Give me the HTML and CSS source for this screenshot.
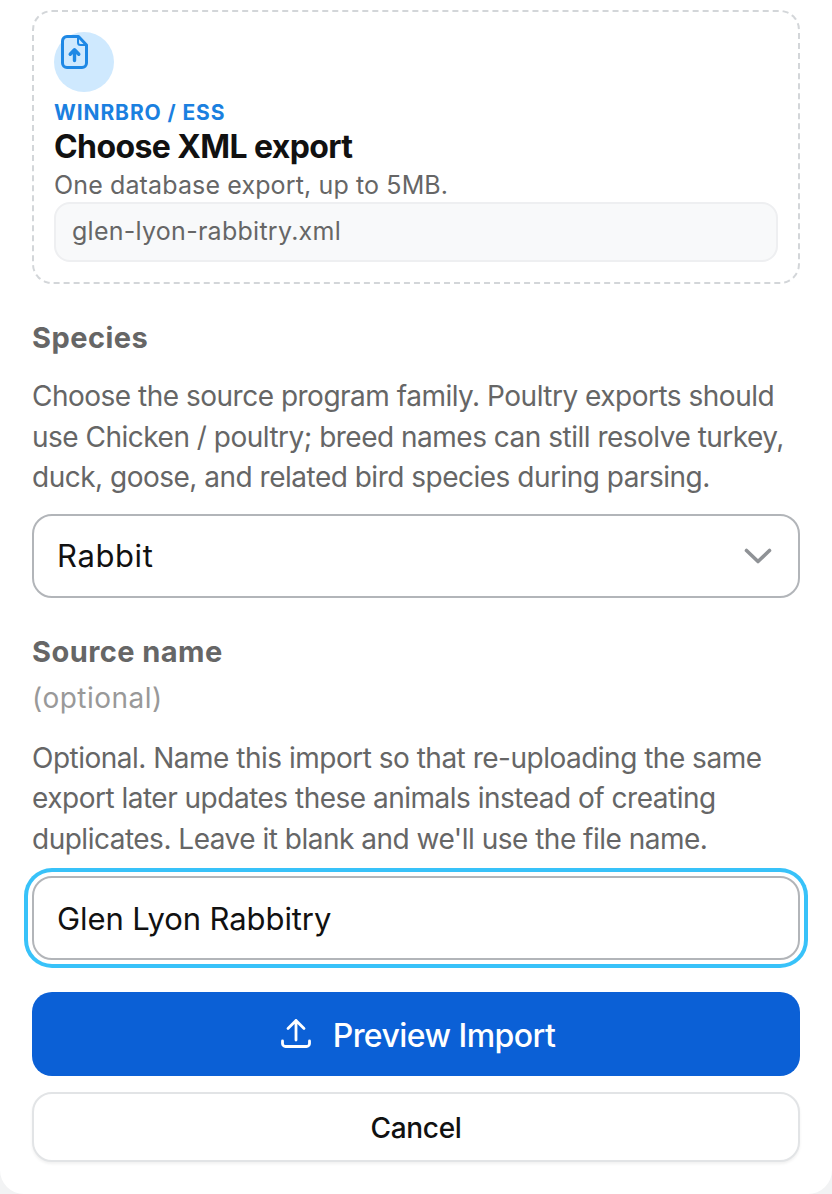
FILE: index.html
```html
<!DOCTYPE html>
<html lang="en">
<head>
<meta charset="utf-8">
<title>Import</title>
<link rel="stylesheet" href="styles.css">
</head>
<body>
<main class="sheet">
  <section class="drop">
    <div class="drop-icon">
      <svg class="file-svg" viewBox="0 0 27 34" width="27" height="34" fill="none">
        <path d="M6 1.500h11.500L25.500 10V28a4.500 4.500 0 0 1-4.500 4.500H6A4.500 4.500 0 0 1 1.500 28V6A4.500 4.500 0 0 1 6 1.500Z" stroke="#1e88e5" stroke-width="3" stroke-linejoin="round"/>
        <path d="M17 2v5.500a2.500 2.500 0 0 0 2.500 2.500H25" stroke="#1e88e5" stroke-width="2"/>
        <path d="M13.500 25.500V15M9.200 19.200 13.500 14.800 17.800 19.200" stroke="#1e88e5" stroke-width="3.400" stroke-linecap="round" stroke-linejoin="round"/>
      </svg>
    </div>
    <div class="eyebrow">WINRBRO / ESS</div>
    <h2 class="drop-title">Choose XML export</h2>
    <p class="drop-sub">One database export, up to 5MB.</p>
    <div class="file-name">glen-lyon-rabbitry.xml</div>
  </section>

  <section class="field species">
    <label class="label">Species</label>
    <p class="help">Choose the source program family. Poultry exports should use Chicken / poultry; breed names can still resolve turkey, duck, goose, and related bird species during parsing.</p>
    <div class="control select">
      <span class="select-value">Rabbit</span>
      <svg viewBox="0 0 28 16" width="28" height="16" fill="none"><path d="M2.500 2.500 14 13.500 25.500 2.500" stroke="#8f9296" stroke-width="3.600" stroke-linecap="round" stroke-linejoin="round"/></svg>
    </div>
  </section>

  <section class="field source">
    <label class="label">Source name</label>
    <div class="optional">(optional)</div>
    <p class="help">Optional. Name this import so that re-uploading the same export later updates these animals instead of creating duplicates. Leave it blank and we'll use the file name.</p>
    <div class="control focused">Glen Lyon Rabbitry</div>
  </section>

  <button class="btn primary">
    <svg viewBox="0 0 32 32" width="32" height="32" fill="none"><path d="M16 22V2.500M8 10.500l8-8 8 8M2.500 23v2.500A3 3 0 0 0 5.500 28.500h21a3 3 0 0 0 3-3V23" stroke="#fff" stroke-width="2.800" stroke-linecap="round" stroke-linejoin="round"/></svg>
    <span class="btn-label">Preview Import</span>
  </button>
  <button class="btn secondary">Cancel</button>
</main>
</body>
</html>
```
FILE: styles.css
```css
* { box-sizing: border-box; }
html, body { margin: 0; height: 100%; background: #f2f3f4; overflow: hidden; }
body { font-family: Inter, "Noto Sans", sans-serif; }
.sheet {
  width: 832px; height: 1194px; background: #fff;
  padding: 10px 32px 0;
  border-radius: 0 0 24px 24px;
  display: flex; flex-direction: column;
}
.drop {
  height: 274px;
  border: 2px dashed #d3d6d9;
  border-radius: 20px;
  padding: 20px;
  display: flex; flex-direction: column;
}
.drop-icon { width: 60px; height: 60px; border-radius: 50%; background: #cfe9fe; position: relative; flex: none; }
.file-svg { position: absolute; left: 6.500px; top: 3px; }
.eyebrow { margin-top: 9px; font-size: 21px; line-height: 24px; font-weight: 700; color: #1a80e0; letter-spacing: 0.9px; }
.drop-title { margin: 3px 0 0; font-size: 32px; line-height: 38px; font-weight: 700; color: #111; letter-spacing: -0.6px; }
.drop-sub { margin: 4px 0 0; font-size: 25px; line-height: 30px; color: #666; letter-spacing: 0.13px; }
.file-name {
  margin-top: 2px; height: 60px; border: 2px solid #eeeff1; border-radius: 16px; background: #f8f9fa;
  padding: 0 16px 2px; display: flex; align-items: center; font-size: 25px; color: #666; letter-spacing: 0.27px;
}
.field { display: flex; flex-direction: column; }
.species { margin-top: 36px; }
.source { margin-top: 36px; }
.label { font-size: 29px; line-height: 36px; font-weight: 700; color: #666; letter-spacing: 0.45px; }
.optional { margin-top: 10px; font-size: 28px; line-height: 36px; color: #999; letter-spacing: 0.5px; }
.help { margin: 20px 0 0; font-size: 28px; line-height: 40.600px; color: #666; letter-spacing: -0.5px; }
.source .help { margin-top: 22px; }
.control {
  height: 84px; border: 2px solid #b2b5b9; border-radius: 20px; background: #fff;
  padding: 0 23px; display: flex; align-items: center; justify-content: space-between;
  font-size: 31px; color: #111; letter-spacing: -0.1px;
}
.select { margin-top: 16px; padding-right: 26px; }
.select-value { letter-spacing: 0.6px; }
.focused { margin-top: 16px; padding-top: 2px; box-shadow: 0 0 0 4px #fff, 0 0 0 8px #38c2f9; }
.btn {
  width: 100%; border-radius: 20px; font-family: inherit; display: flex; align-items: center; justify-content: center; cursor: pointer;
}
.primary { margin-top: 32px; height: 84px; background: #0b60d6; border: 0; color: #fff; font-size: 32px; font-weight: 500; gap: 21px; letter-spacing: -0.55px; padding: 0 0 0 3px; }
.btn-label { padding-top: 4px; }
.secondary { margin-top: 16px; height: 70px; background: #fff; border: 2px solid #e2e4e6; color: #111; font-size: 28px; font-weight: 500; letter-spacing: -0.3px; padding: 2px 0 0; box-shadow: 0 2px 3px rgba(0,0,0,.06); }
```
